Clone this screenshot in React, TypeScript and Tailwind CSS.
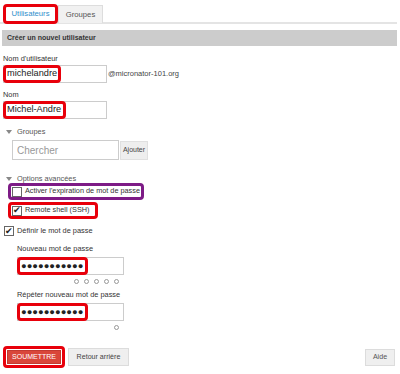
import React from "react";

function Caret() {
    return <span className="inline-block w-0 h-0 border-l-[3px] border-r-[3px] border-t-[4px] border-l-transparent border-r-transparent border-t-[#888] mr-[5px]" />;
}

function Box({ checked }: { checked?: boolean }) {
    return (
        <span className="w-[10px] h-[10px] border border-[#666] bg-white flex items-center justify-center text-[9px] leading-none text-[#222] shrink-0">
            {checked ? "✔" : ""}
        </span>
    );
}

function Dots({ n }: { n: number }) {
    return (
        <div className="flex justify-end gap-[5px] pr-[5px] w-[107px]">
            {[...Array(n)].map((_, i) => (
                <span key={`dot-${i}`} className="w-[5px] h-[5px] rounded-full border border-[#999]" />
            ))}
        </div>
    );
}

function PasswordField() {
    return (
        <div className="flex w-[107px] h-[18px] border border-[#ccc] bg-white">
            <span className="-m-px h-[18px] w-[71px] border-[3px] border-[#e8000b] rounded-[4px] flex items-center pl-[1px] text-[9.4px] leading-none text-[#222] whitespace-nowrap">
                ●●●●●●●●●●●
            </span>
        </div>
    );
}

export default function App() {
    return (
        <div className="w-[400px] h-[374px] bg-white overflow-hidden font-[family-name:'Liberation_Sans',Arial,sans-serif] text-[#333] whitespace-nowrap">
            {/* tabs */}
            <div className="flex items-end pl-[3px] pt-[4px] mr-[3px] border-b-2 border-[#e4e4e4] h-[24px]">
                <div className="w-[55px] h-[20px] -mb-[2px] border-[3px] border-[#e8000b] rounded-[4px] bg-white flex items-center justify-center text-[7.7px] text-[#2f8fcb]">
                    Utilisateurs
                </div>
                <div className="w-[45px] h-[18px] -mb-[1px] border border-[#ddd] border-b-0 bg-[#f1f1f1] flex items-center justify-center text-[7.7px] text-[#555]">
                    Groupes
                </div>
            </div>

            <div className="mt-[6px] ml-[2px] mr-[3px] h-[16px] bg-[#cccccc] flex items-center pl-[5px] text-[7px] font-bold text-[#333]">
                Créer un nouvel utilisateur
            </div>

            <div className="pl-[3px]">
                <div className="mt-[7px] text-[7.4px] leading-[11px]">Nom d'utilisateur</div>
                <div className="mt-[1px] flex items-center">
                    <div className="flex w-[104px] h-[18px] border border-[#ccc] bg-white">
                        <span className="-m-px h-[18px] w-[58px] border-[3px] border-[#e8000b] rounded-[4px] flex items-center pl-[1px] text-[9.2px] leading-none text-[#222]">
                            michelandre
                        </span>
                    </div>
                    <span className="ml-[1px] text-[7.5px] text-[#444]">@micronator-101.org</span>
                </div>

                <div className="mt-[6px] text-[7.4px] leading-[11px]">Nom</div>
                <div className="mt-[1px] flex w-[104px] h-[18px] border border-[#ccc] bg-white">
                    <span className="-m-px h-[18px] w-[63px] border-[3px] border-[#e8000b] rounded-[4px] flex items-center pl-[1px] text-[9.2px] leading-none text-[#222]">
                        Michel-Andre
                    </span>
                </div>

                <div className="mt-[7px] pl-[3px] flex items-center text-[7.4px] leading-[12px] text-[#555]">
                    <Caret />
                    Groupes
                </div>
                <div className="mt-[2px] ml-[9px] flex items-end">
                    <div className="w-[107px] h-[20px] border border-[#ccc] bg-white flex items-center pl-[4px] text-[10px] text-[#999]">
                        Chercher
                    </div>
                    <div className="ml-[1px] w-[28px] h-[19px] bg-[#eeeeee] border border-[#e0e0e0] flex items-center justify-center text-[7px] text-[#444]">
                        Ajouter
                    </div>
                </div>

                <div className="mt-[14px] pl-[3px] flex items-center text-[7.4px] leading-[10px] text-[#555]">
                    <Caret />
                    Options avancées
                </div>
                <div className="mt-[-1px] ml-[5px] w-[136px] h-[17px] border-[3px] border-[#7d1b86] rounded-[4px] flex items-center gap-[3px] pl-[1px] text-[7.3px] text-[#333]">
                    <Box />
                    Activer l'expiration de mot de passe
                </div>
                <div className="mt-[2px] ml-[5px] w-[90px] h-[17px] border-[3px] border-[#e8000b] rounded-[4px] flex items-center gap-[3px] pl-[1px] text-[7.3px] text-[#333]">
                    <Box checked />
                    Remote shell (SSH)
                </div>

                <div className="mt-[6px] ml-[1px] flex items-center gap-[3px] text-[7.4px] leading-[12px]">
                    <Box checked />
                    Définir le mot de passe
                </div>

                <div className="pl-[14px]">
                    <div className="mt-[6px] text-[7.4px] leading-[12px]">Nouveau mot de passe</div>
                    <div className="mt-[2px]">
                        <PasswordField />
                    </div>
                    <div className="mt-[4px]">
                        <Dots n={5} />
                    </div>
                    <div className="mt-[5px] text-[7.4px] leading-[12px]">Répéter nouveau mot de passe</div>
                    <div className="mt-[2px]">
                        <PasswordField />
                    </div>
                    <div className="mt-[4px]">
                        <Dots n={1} />
                    </div>
                </div>

                <div className="mt-[16px] mr-[5px] flex items-center">
                    <div className="w-[62px] h-[22px] border-[3px] border-[#e8000b] rounded-[4px] flex items-center justify-center">
                        <div className="w-[54px] h-[14px] bg-[#d9463a] border border-[#c23a30] flex items-center justify-center text-[7px] text-white">
                            SOUMETTRE
                        </div>
                    </div>
                    <div className="ml-[3px] w-[61px] h-[18px] bg-[#efefef] border border-[#dcdcdc] flex items-center justify-center text-[7.1px] text-[#444]">
                        Retour arrière
                    </div>
                    <div className="ml-auto w-[30px] h-[17px] bg-[#efefef] border border-[#dcdcdc] flex items-center justify-center text-[7.1px] text-[#555]">
                        Aide
                    </div>
                </div>
            </div>
        </div>
    );
}
